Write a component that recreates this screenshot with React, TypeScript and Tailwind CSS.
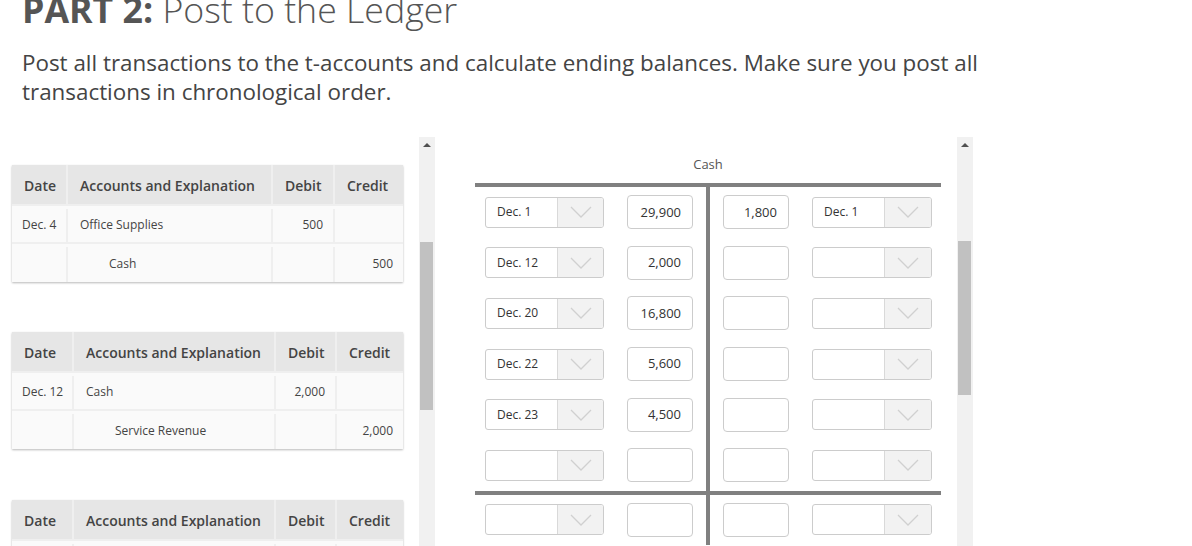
import React from "react";

type Row = { date: string; acct: string; debit: string; credit: string; indent?: boolean };

function Chevron() {
  return (
    <svg width="22" height="12" viewBox="0 0 22 12" fill="none">
      <path d="M1 1 L11 11 L21 1" stroke="#d0d0d0" strokeWidth="1.3" />
    </svg>
  );
}

function Sel({ v, w = "w-[119px]" }: { v?: string; w?: string }) {
  return (
    <div className={`flex h-[31px] ${w} overflow-hidden rounded-[3px] border border-[#cccccc] bg-white`}>
      <div className="flex w-[71px] items-center pl-[11px] text-[12px] text-[#333333]">{v}</div>
      <div className="flex flex-1 items-center justify-center border-l border-[#d9d9d9] bg-[#f2f2f2]">
        <Chevron />
      </div>
    </div>
  );
}

function Inp({ v }: { v?: string }) {
  return (
    <div className="flex h-[34px] w-[66px] items-center justify-end rounded-[4px] border border-[#cccccc] bg-white pr-[11px] text-[13px] text-[#333333]">
      {v}
    </div>
  );
}

function LeftRow({ d, a }: { d?: string; a?: string }) {
  return (
    <div className="flex h-[50.6px] items-center gap-[23px] pl-[10px]">
      <Sel v={d} />
      <Inp v={a} />
    </div>
  );
}

function RightRow({ d, a }: { d?: string; a?: string }) {
  return (
    <div className="flex h-[50.6px] items-center gap-[23px] pl-[13px]">
      <Inp v={a} />
      <Sel v={d} w="w-[120px]" />
    </div>
  );
}

function Scrollbar({ thumb }: { thumb: string }) {
  return (
    <div className="flex h-full w-[16px] flex-col items-center bg-[#f1f1f1]">
      <div className="mt-[6px] h-0 w-0 border-x-[4px] border-b-[4px] border-x-transparent border-b-[#505050]" />
      <div className={`ml-[-2px] w-[13px] bg-[#c1c1c1] ${thumb}`} />
    </div>
  );
}

function JTable({ cols, rows, className }: { cols: string; rows: Row[]; className?: string }) {
  const head = ["Date", "Accounts and Explanation", "Debit", "Credit"];
  return (
    <div className={`w-[391px] bg-[#fafafa] shadow-[0_1px_2px_rgba(0,0,0,0.28)] ${className ?? ""}`}>
      <div className={`grid ${cols} h-[41px] bg-[#e6e6e6] text-[14px] font-semibold text-[#444444]`}>
        {head.map((h, i) => (
          <div
            key={h}
            className={`flex items-center border-b-2 border-[#efefef] pl-[12px] pt-[2px] ${i < 3 ? "border-r-2" : ""}`}
          >
            {h}
          </div>
        ))}
      </div>
      {rows.map((r, ri) => {
        const bb = ri < rows.length - 1 ? "border-b-2" : "";
        return (
          <div key={ri} className={`grid ${cols} h-[38px] pt-[2.5px] text-[12px] text-[#444444]`}>
            <div className={`flex items-center border-r-2 border-[#efefef] pl-[10px] ${bb}`}>{r.date}</div>
            <div
              className={`flex items-center border-r-2 border-[#efefef] ${r.indent ? "pl-[41px]" : "pl-[12px]"} ${bb}`}
            >
              {r.acct}
            </div>
            <div className={`flex items-center justify-end border-r-2 border-[#efefef] pr-[10px] ${bb}`}>
              {r.debit}
            </div>
            <div className={`flex items-center justify-end border-[#efefef] pr-[10px] ${bb}`}>{r.credit}</div>
          </div>
        );
      })}
    </div>
  );
}

export default function App() {
  const left = [
    { d: "Dec. 1", a: "29,900" },
    { d: "Dec. 12", a: "2,000" },
    { d: "Dec. 20", a: "16,800" },
    { d: "Dec. 22", a: "5,600" },
    { d: "Dec. 23", a: "4,500" },
    { d: "", a: "" },
  ];
  const right: { d?: string; a?: string }[] = [{ d: "Dec. 1", a: "1,800" }, {}, {}, {}, {}, {}];

  return (
    <div className="h-[546px] w-[1192px] overflow-hidden bg-white font-['Open_Sans','Noto_Sans',Arial,sans-serif] text-[#444444]">
      <h1 className="mt-[-13px] pl-[22px] text-[35.7px] leading-[44px] text-[#555555]">
        <span className="font-bold">PART 2:</span> <span className="font-light">Post to the Ledger</span>
      </h1>
      <p className="mt-[17px] w-[1000px] pl-[22px] text-[22.4px] leading-[29px] text-[#444444]">
        Post all transactions to the t-accounts and calculate ending balances. Make sure you post all transactions
        in chronological order.
      </p>

      <div className="mt-[31px] flex h-[409px]">
        {/* left panel */}
        <div className="w-[419px] pl-[12px] pt-[28px]">
          <JTable
            cols="grid-cols-[56px_205px_62px_68px]"
            rows={[
              { date: "Dec. 4", acct: "Office Supplies", debit: "500", credit: "" },
              { date: "", acct: "Cash", debit: "", credit: "500", indent: true },
            ]}
          />
          <JTable
            className="mt-[50px]"
            cols="grid-cols-[62px_202px_61px_66px]"
            rows={[
              { date: "Dec. 12", acct: "Cash", debit: "2,000", credit: "" },
              { date: "", acct: "Service Revenue", debit: "", credit: "2,000", indent: true },
            ]}
          />
          <JTable
            className="mt-[51px]"
            cols="grid-cols-[62px_202px_61px_66px]"
            rows={[{ date: "", acct: "", debit: "", credit: "" }]}
          />
        </div>
        <Scrollbar thumb="mt-[95px] h-[168px]" />

        {/* right panel */}
        <div className="w-[522px]">
          <div className="ml-[40px] w-[466px] pt-[18px]">
            <div className="text-center text-[13px] leading-[19px] text-[#555555]">Cash</div>
            <div className="mt-[9px] h-[4px] bg-[#808080]" />
            <div className="flex">
              <div className="w-[231px]">
                {left.map((r, i) => (
                  <LeftRow key={i} d={r.d} a={r.a} />
                ))}
              </div>
              <div className="w-[4px] bg-[#808080]" />
              <div className="w-[231px]">
                {right.map((r, i) => (
                  <RightRow key={i} d={r.d} a={r.a} />
                ))}
              </div>
            </div>
            <div className="h-[4px] bg-[#808080]" />
            <div className="flex">
              <div className="w-[231px]">
                <LeftRow />
              </div>
              <div className="w-[4px] bg-[#808080]" />
              <div className="w-[231px]">
                <RightRow />
              </div>
            </div>
          </div>
        </div>
        <Scrollbar thumb="mt-[94px] h-[154px]" />
      </div>
    </div>
  );
}
